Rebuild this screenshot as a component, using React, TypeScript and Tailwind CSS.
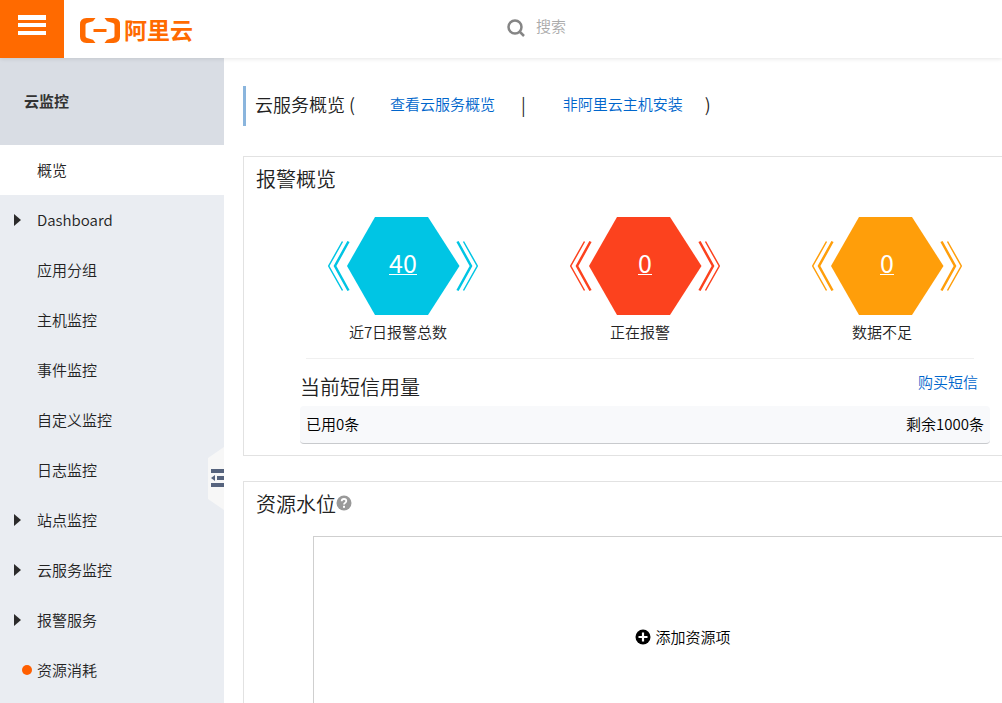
import React from "react"

type NavItem = {
  label: string
  active?: boolean
  expandable?: boolean
  dot?: boolean
}

const navItems: NavItem[] = [
  { label: "概览", active: true },
  { label: "Dashboard", expandable: true },
  { label: "应用分组" },
  { label: "主机监控" },
  { label: "事件监控" },
  { label: "自定义监控" },
  { label: "日志监控" },
  { label: "站点监控", expandable: true },
  { label: "云服务监控", expandable: true },
  { label: "报警服务", expandable: true },
  { label: "资源消耗", dot: true },
]

const alarms = [
  { label: "近7日报警总数", count: 40, color: "text-[#00c5e4]" },
  { label: "正在报警", count: 0, color: "text-[#fc421e]" },
  { label: "数据不足", count: 0, color: "text-[#ff9e0a]" },
]

function Header() {
  return (
    <header className="relative z-10 flex h-[58px] shrink-0 items-stretch bg-white shadow-[0_1px_4px_rgba(0,0,0,0.1)]">
      <button aria-label="菜单" className="flex w-16 justify-center bg-[#ff6a00] pt-[15px]">
        <svg width="28" height="20" viewBox="0 0 28 20" fill="#fff">
          <rect width="28" height="5" />
          <rect y="8" width="28" height="4" />
          <rect y="16" width="28" height="4" />
        </svg>
      </button>
      <a href="#" className="ml-4 flex w-[427px] items-center gap-1 pt-[3px] text-[#ff6a00]">
        <svg width="40" height="25" viewBox="0 0 40 25" fill="currentColor">
          <path d="M15.500 0H6.500Q0 0 0 6.500V18.500Q0 25 6.500 25H15.500L13 21.800L7 20Q5.500 19.500 5.500 18V7Q5.500 5.500 7 5L13 3.200Z" />
          <path d="M24.500 0H33.500Q40 0 40 6.500V18.500Q40 25 33.500 25H24.500L27 21.800L33 20Q34.500 19.500 34.500 18V7Q34.500 5.500 33 5L27 3.200Z" />
          <rect x="13.500" y="11" width="13" height="3" />
        </svg>
        <span className="pb-1 text-[23px] leading-6 font-bold">阿里云</span>
      </a>
      <label className="flex flex-1 items-center pb-[6px]">
        <svg width="18" height="18" viewBox="0 0 18 18" fill="none" stroke="#858585" strokeWidth="2.500" className="mt-1">
          <circle cx="8" cy="8" r="6.500" />
          <path d="M12.500 12.500L17 17" />
        </svg>
        <input
          aria-label="搜索"
          placeholder="搜索"
          className="ml-[11px] min-w-0 flex-1 text-[15px] leading-6 outline-none placeholder:text-[#aaa]"
        />
      </label>
    </header>
  )
}

function Sidebar() {
  return (
    <aside className="relative w-56 shrink-0 bg-[#eaedf2]">
      <h2 className="flex h-[87px] items-center bg-[#d9dde4] pl-6 text-[15px] font-bold text-[#333]">云监控</h2>
      <nav>
        {navItems.map((item) => (
          <a
            key={item.label}
            href="#"
            className={`flex h-[50px] items-center text-[15px] ${item.active ? "bg-white" : ""}`}
          >
            <span className="flex w-[37px] pl-[14px]">
              {item.expandable && (
                <svg width="7" height="12" viewBox="0 0 7 12" fill="#2b2b2b">
                  <path d="M0 0L7 6L0 12Z" />
                </svg>
              )}
              {item.dot && <span className="ml-2 size-[10px] rounded-full bg-[#ff5f00]" />}
            </span>
            {item.label}
          </a>
        ))}
      </nav>
      <button aria-label="收起" className="absolute top-[389px] right-0">
        <svg width="16" height="63" viewBox="0 0 16 63">
          <path d="M16 0L0 11V52L16 63Z" fill="#f7f7f7" />
          <g fill="#56637d">
            <rect x="3" y="22" width="13" height="4" />
            <path d="M3 31L7 28V34Z" />
            <rect x="9" y="29" width="7" height="4" />
            <rect x="3" y="36" width="13" height="4" />
          </g>
        </svg>
      </button>
    </aside>
  )
}

function AlarmHexagon({ label, count, color }: { label: string; count: number; color: string }) {
  return (
    <div className="flex w-[150px] flex-col items-center">
      <div className={`grid place-items-center ${color}`}>
        <svg width="150" height="98" viewBox="0 0 150 98" fill="none" stroke="currentColor" className="col-start-1 row-start-1">
          <path d="M19 49L47 0H100L131.500 49L100 98H47Z" fill="currentColor" stroke="none" />
          <path d="M14.500 24.500L0.700 49L14.500 73.500M135.500 24.500L149.300 49L135.500 73.500" strokeWidth="1.500" />
          <path d="M20.500 24.500L7 49L20.500 73.500M129.500 24.500L143 49L129.500 73.500" strokeWidth="2.500" />
        </svg>
        <a href="#" className="col-start-1 row-start-1 mb-2 border-b border-white text-[25px] leading-6 font-normal text-white">
          {count}
        </a>
      </div>
      <span className="mt-[3px] pr-[10px] text-[15px] leading-7 whitespace-nowrap">{label}</span>
    </div>
  )
}

function AlarmOverview() {
  return (
    <section className="mt-[30px] h-[300px] shrink-0 border border-r-0 border-[#e2e2e2] pr-3">
      <h2 className="pt-2 pl-3 text-xl leading-7">报警概览</h2>
      <div className="ml-[56px]">
        <div className="mt-6 flex justify-between px-7">
          {alarms.map((alarm) => (
            <AlarmHexagon key={alarm.label} {...alarm} />
          ))}
        </div>
        <hr className="mt-3 mr-4 ml-[6px] border-[#f0f0f0]" />
        <div className="flex h-[47px] items-center justify-between pr-3">
          <h3 className="pt-2 text-xl leading-7">当前短信用量</h3>
          <a href="#" className="pb-[2px] text-[15px] leading-6 text-[#0066cc]">
            购买短信
          </a>
        </div>
        <div className="flex h-[38px] items-center justify-between rounded border-b border-[#c8cacd] bg-[#f8f9fb] px-[6px] text-[15px] text-black">
          <span>已用0条</span>
          <span>剩余1000条</span>
        </div>
      </div>
    </section>
  )
}

function ResourceLevel() {
  return (
    <section className="mt-[25px] flex-1 border-t border-l border-[#e2e2e2]">
      <h2 className="flex items-center pt-2 pl-3 text-xl leading-7">
        资源水位
        <svg width="16" height="16" viewBox="0 0 16 16" fill="none" className="mb-[3px]">
          <circle cx="8" cy="8" r="7.500" fill="#999" />
          <path d="M5.700 6.300Q5.700 4 8 4Q10.300 4 10.300 6Q10.300 7 9.200 7.700Q8 8.400 8 9.600" stroke="#fff" strokeWidth="1.800" />
          <rect x="7" y="10.800" width="2" height="2" fill="#fff" />
        </svg>
      </h2>
      <div className="mt-[18px] -mr-[51px] ml-[69px] flex h-[202px] items-center justify-center border border-[#cfcfcf]">
        <button className="flex items-center gap-1 text-[15px] text-black">
          <svg width="16" height="16" viewBox="0 0 16 16">
            <circle cx="8" cy="8" r="7.500" fill="#000" />
            <path d="M8 3.500V12.500M3.500 8H12.500" stroke="#fff" strokeWidth="2.200" />
          </svg>
          添加资源项
        </button>
      </div>
    </section>
  )
}

export default function App() {
  return (
    <div className="flex h-screen flex-col overflow-hidden bg-white font-['Noto_Sans_CJK_SC',sans-serif] font-[350] text-[#222]">
      <Header />
      <div className="flex min-h-0 flex-1">
        <Sidebar />
        <main className="flex min-w-0 flex-1 flex-col pt-7 pl-[19px]">
          <div className="flex h-10 shrink-0 items-center border-l-3 border-[#8ab5dd] pb-1 pl-[9px] text-lg whitespace-nowrap">
            <h1>云服务概览 (</h1>
            <a href="#" className="ml-[35px] text-[15px] text-[#0066cc]">
              查看云服务概览
            </a>
            <span className="ml-[26px]">|</span>
            <a href="#" className="ml-[37px] text-[15px] text-[#0066cc]">
              非阿里云主机安装
            </a>
            <span className="ml-[22px]">)</span>
          </div>
          <AlarmOverview />
          <ResourceLevel />
        </main>
      </div>
    </div>
  )
}
